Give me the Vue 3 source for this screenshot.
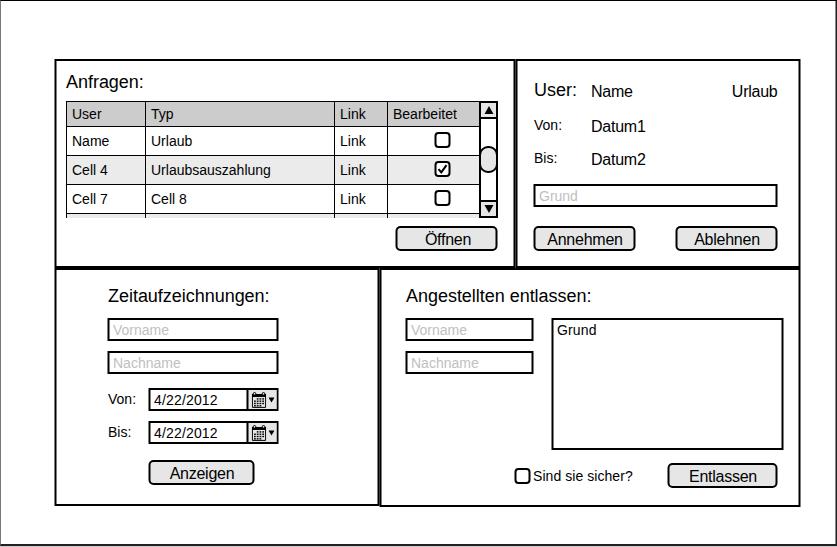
<script setup>
const rows = [
  { user: 'Name', typ: 'Urlaub', done: false },
  { user: 'Cell 4', typ: 'Urlaubsauszahlung', done: true },
  { user: 'Cell 7', typ: 'Cell 8', done: false },
]
const dates = ['Von:', 'Bis:']
const dots = []
for (let r = 0; r < 4; r++)
  for (let c = 0; c < 4; c++)
    if (!(r === 0 && c === 0) && !(r === 3 && c === 3)) dots.push({ x: 2.5 + c * 2.75, y: 6.2 + r * 2.3 })
</script>

<template>
  <div class="page">
    <div class="board">
      <section class="panel requests">
        <h2>Anfragen:</h2>
        <div class="tablewrap">
          <div class="table">
            <div class="row head"><span>User</span><span>Typ</span><span>Link</span><span>Bearbeitet</span></div>
            <div v-for="(r, i) in rows" :key="i" class="row" :class="{ alt: i === 1 }">
              <span>{{ r.user }}</span><span>{{ r.typ }}</span><span>Link</span>
              <span class="mid"><i class="check"><svg v-if="r.done" viewBox="0 0 12 12"><path d="M2 6.2 L4.8 9.3 L10 2.2" fill="none" stroke="#000" stroke-width="2" /></svg></i></span>
            </div>
            <div class="row alt last"><span></span><span></span><span></span><span></span></div>
          </div>
          <div class="scroll">
            <div class="arrow"><svg viewBox="0 0 10 8"><path d="M5 0 L9.5 8 H0.5Z" /></svg></div>
            <div class="track"><div class="thumb"></div></div>
            <div class="arrow"><svg viewBox="0 0 10 8"><path d="M0.5 0 H9.5 L5 8Z" /></svg></div>
          </div>
        </div>
        <button class="btn open">Öffnen</button>
      </section>

      <section class="panel detail">
        <div class="line first"><h2>User:</h2><b>Name</b><b class="right">Urlaub</b></div>
        <div class="line"><label>Von:</label><b>Datum1</b></div>
        <div class="line"><label>Bis:</label><b>Datum2</b></div>
        <div class="field reason">Grund</div>
        <div class="actions"><button class="btn">Annehmen</button><button class="btn">Ablehnen</button></div>
      </section>

      <section class="panel times">
        <h2>Zeitaufzeichnungen:</h2>
        <div class="field">Vorname</div>
        <div class="field">Nachname</div>
        <div v-for="d in dates" :key="d" class="daterow">
          <label>{{ d }}</label>
          <div class="date">
            <span>4/22/2012</span>
            <div class="pick">
              <svg class="cal" viewBox="0 0 15 16">
                <path d="M0.9 2.5H14.1V15.4H0.9Z" fill="#e6e6e6" stroke="#000" stroke-width="1" />
                <path d="M0.5 2H14.5V5H0.5Z" />
                <circle cx="3" cy="1.8" r="1.3" fill="#e6e6e6" stroke="#000" /><circle cx="12" cy="1.8" r="1.3" fill="#e6e6e6" stroke="#000" />
                <rect v-for="(p, i) in dots" :key="i" :x="p.x" :y="p.y" width="1.8" height="1.4" />
              </svg>
              <svg class="down" viewBox="0 0 6 6"><path d="M0 0.5H6L3 5.5Z" /></svg>
            </div>
          </div>
        </div>
        <button class="btn show">Anzeigen</button>
      </section>

      <section class="panel dismiss">
        <h2>Angestellten entlassen:</h2>
        <div class="form">
          <div class="names"><div class="field">Vorname</div><div class="field">Nachname</div></div>
          <div class="area">Grund</div>
        </div>
        <div class="confirm"><i class="check"></i><span>Sind sie sicher?</span><button class="btn">Entlassen</button></div>
      </section>
    </div>
  </div>
</template>

<style>
body { background: #d0cdcf; }
</style>

<style scoped>
* { box-sizing: border-box; }
.page { width: 837px; height: 546px; padding: 58px 0 0 54px; background: #fff; border: solid #231f20; border-width: 1px 1px 2px 1px; border-left-color: #777; border-top-color: #000; font: 14px/16px "Liberation Sans", Arial, sans-serif; color: #000; box-shadow: inset -1px 0 #888; }
.board { display: grid; width: 746px; grid-template-columns: 325px 136px 285px; grid-template-rows: 209px 239px; align-items: start; transform: translateX(-0.5px); }
.panel { border: 2px solid #000; height: 100%; }
h2 { margin: 0; padding-left: 0.5px; font-size: 18px; line-height: 20px; font-weight: 400; white-space: nowrap; letter-spacing: -0.03px; }
b { font-weight: 400; font-size: 16px; line-height: 18px; letter-spacing: -0.25px; padding-left: 0.5px; }
label { font-size: 14px; padding-left: 0.5px; }
.requests { grid-column: 1 / 3; padding: 11px 16px 0 9px; }
.tablewrap { display: flex; margin-top: 9px; height: 117px; transform: translateX(0.5px); }
.table { flex: 1; overflow: hidden; border: solid #000; border-width: 1px 0 0 1px; }
.row { display: grid; grid-template-columns: 79px 189px 53px 1fr; height: 29px; border-bottom: 1px solid #000; }
.row > span { padding: 6px 0 0 5px; border-right: 1px solid #000; }
.row > span:last-child { border-right: 0; }
.row.head { height: 25px; background: #ccc; }
.row.head > span { padding-top: 4px; }
.row.alt { background: #ebebeb; }
.row > .mid { padding: 5px 0 0 47px; }
.mid .check { transform: translateX(-0.5px); }
.check { display: block; width: 16px; height: 16px; border: 2px solid #000; border-radius: 4px; background: #fff; flex: none; }
.check svg { display: block; width: 12px; height: 12px; }
.scroll { width: 19px; border: 2px solid #000; display: flex; flex-direction: column; }
.arrow { flex: none; height: 16px; display: flex; align-items: center; justify-content: center; background: #e6e6e6; border-bottom: 2px solid #000; }
.arrow:last-child { border: 0; border-top: 2px solid #000; }
.arrow svg { width: 10px; height: 8px; display: block; }
.track { flex: 1; padding-top: 27px; }
.thumb { height: 27px; margin: 0 -2px; border: 2px solid #000; border-radius: 9px; background: #e6e6e6; }
.btn { display: block; width: 102px; height: 25px; padding: 2px 0 0 1px; border: 2px solid #000; border-radius: 5px; background: #e6e6e6; color: #000; font: 16px/19px "Liberation Sans", Arial, sans-serif; letter-spacing: -0.25px; text-align: center; }
.open { margin: 8px 0 0 auto; padding-left: 3px; }
.detail { padding: 19px 22px 0 16px; }
.line { display: flex; height: 33px; }
.line.first { height: 37px; }
.line h2, .line label { width: 57px; }
.line b { padding-top: 3px; }
.line:not(.first) b { padding-top: 1px; }
.line .right { margin-left: auto; margin-right: -1px; }
.field { height: 23px; width: 171px; border: 2px solid #000; padding: 2px 0 0 3.5px; color: #c0c0c0; line-height: 16px; }
.reason { width: 244px; margin-top: 1px; }
.actions { display: flex; justify-content: space-between; width: 244px; margin-top: 19px; }
.times { padding: 16px 0 0 51px; height: 238px; }
.times h2 { margin-bottom: 12px; }
.field + .field { margin-top: 10px; }
.daterow { display: flex; width: 171px; margin-top: 10px; }
.field + .daterow { margin-top: 14px; }
.daterow label { width: 41px; padding-top: 3px; }
.date { width: 130px; height: 23px; display: flex; border: 2px solid #000; line-height: 16px; letter-spacing: 0.16px; }
.date span { flex: 1; padding: 2px 0 0 3.5px; }
.pick { width: 30px; border-left: 2px solid #000; background: #e6e6e6; display: flex; align-items: center; padding-left: 2.5px; }
.cal { width: 15px; height: 16px; }
.down { width: 6px; height: 6px; margin-left: 2.5px; }
.show { width: 106px; margin: 16px 0 0 41px; }
.dismiss { grid-column: 2 / 4; padding: 16px 15px 0 24px; }
.dismiss .field { width: 128px; }
.form { display: flex; justify-content: space-between; margin-top: 12px; }
.area { width: 232px; height: 132px; border: 2px solid #000; padding: 2px 3.5px; letter-spacing: 0.15px; }
.confirm { display: flex; align-items: center; margin: 13px 0 0 109px; width: 263px; }
.confirm span { margin-left: 2.5px; letter-spacing: 0.06px; }
.confirm .btn { margin-left: auto; width: 110px; }
</style>
